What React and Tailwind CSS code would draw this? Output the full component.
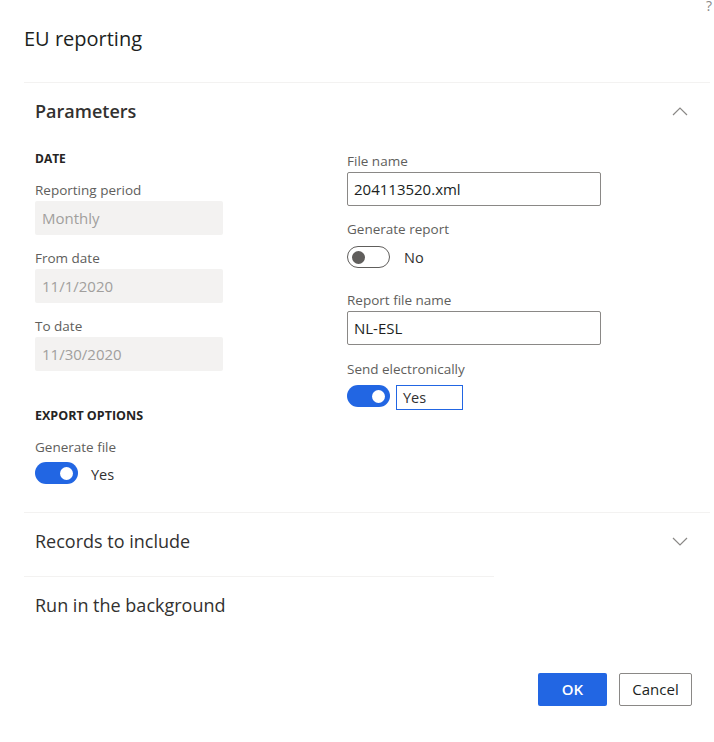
import React from "react";

const font = { fontFamily: '"Open Sans", "Noto Sans", Arial, sans-serif' };

function Chevron({ up }) {
  return (
    <svg width="16" height="9" viewBox="0 0 16 9" className="text-[#8a8886]">
      <path
        d={up ? "M1 8 L8 1 L15 8" : "M1 1 L8 8 L15 1"}
        fill="none"
        stroke="currentColor"
        strokeWidth="1.2"
      />
    </svg>
  );
}

function Toggle({ on }) {
  if (on) {
    return (
      <div className="w-[43px] h-[22px] rounded-full bg-[#2266e3] flex items-center justify-end pr-[5px] shrink-0">
        <div className="w-[13px] h-[13px] rounded-full bg-white" />
      </div>
    );
  }
  return (
    <div className="w-[43px] h-[22px] rounded-full border border-[#605e5c] flex items-center pl-[4px] shrink-0">
      <div className="w-[13px] h-[13px] rounded-full bg-[#605e5c]" />
    </div>
  );
}

function Label({ children, className = "" }) {
  return (
    <div className={`text-[13.5px] leading-[20px] text-[#605e5c] ${className}`}>
      {children}
    </div>
  );
}

function DisabledInput({ value, className = "" }) {
  return (
    <div
      className={`w-[188px] h-[34px] bg-[#f3f2f1] rounded-[2px] flex items-center px-[7px] text-[15px] text-[#a19f9d] ${className}`}
    >
      {value}
    </div>
  );
}

function TextInput({ value, className = "" }) {
  return (
    <div
      className={`w-[254px] h-[34px] border border-[#8a8886] rounded-[2px] flex items-center px-[6px] text-[15px] text-[#201f1e] ${className}`}
    >
      {value}
    </div>
  );
}

export default function App() {
  return (
    <div className="relative w-[714px] h-[742px] bg-white text-[#323130] overflow-hidden" style={font}>
      <div className="absolute top-[-5px] right-[2px] text-[14px] text-[#8a8886]">?</div>

      <div className="pt-[25px] pl-[24px]">
        <h1 className="text-[20px] leading-[28px] font-medium text-[#201f1e]">EU reporting</h1>
      </div>

      <div className="ml-[24px] mr-[4px] mt-[29px] border-t border-[#f3f2f1]">
        {/* Parameters */}
        <div className="flex items-center justify-between h-[56px] pl-[11px] pr-[22px]">
          <div className="text-[18px] leading-[26px] font-semibold text-[#323130]">Parameters</div>
          <Chevron up />
        </div>

        <div className="flex pl-[11px] pt-[11px] pb-[28px]">
          {/* left column */}
          <div className="w-[312px]">
            <div className="text-[12px] leading-[18px] font-bold text-[#252423]">DATE</div>
            <Label className="mt-[12px]">Reporting period</Label>
            <DisabledInput value="Monthly" className="mt-[1px]" />
            <Label className="mt-[13px]">From date</Label>
            <DisabledInput value="11/1/2020" className="mt-[1px]" />
            <Label className="mt-[13px]">To date</Label>
            <DisabledInput value="11/30/2020" className="mt-[1px]" />
            <div className="mt-[36px] text-[12.5px] leading-[18px] font-bold text-[#252423]">EXPORT OPTIONS</div>
            <Label className="mt-[12px]">Generate file</Label>
            <div className="mt-[5px] flex items-center gap-[13px] h-[22px]">
              <Toggle on />
              <span className="text-[14.5px] leading-[18px] text-[#323130] pt-[3px]">Yes</span>
            </div>
          </div>

          {/* right column */}
          <div className="pt-[1px]">
            <Label>File name</Label>
            <TextInput value="204113520.xml" className="mt-[1px]" />
            <Label className="mt-[13px]">Generate report</Label>
            <div className="mt-[7px] flex items-center gap-[14px] h-[22px]">
              <Toggle />
              <span className="text-[14.5px] leading-[18px] text-[#323130] pt-[2px]">No</span>
            </div>
            <Label className="mt-[22px]">Report file name</Label>
            <TextInput value="NL-ESL" className="mt-[1px]" />
            <Label className="mt-[14px]">Send electronically</Label>
            <div className="mt-[6px] flex items-start gap-[6px]">
              <Toggle on />
              <div className="w-[67px] h-[25px] border border-[#2266e3] flex items-center px-[6px] text-[14.5px] text-[#323130]">
                Yes
              </div>
            </div>
          </div>
        </div>
      </div>

      {/* Records to include */}
      <div className="ml-[24px] mr-[4px] border-t border-[#f3f2f1]">
        <div className="flex items-center justify-between pl-[11px] pr-[22px] pt-[15px] pb-[22px]">
          <div className="text-[18px] leading-[26px] text-[#323130]">Records to include</div>
          <Chevron />
        </div>
      </div>

      {/* Run in the background */}
      <div className="ml-[24px] w-[470px] border-t border-[#f3f2f1]">
        <div className="pl-[11px] pt-[15px]">
          <div className="text-[18px] leading-[26px] text-[#323130]">Run in the background</div>
        </div>
      </div>

      <div className="flex justify-end gap-[12px] pr-[22px] mt-[55px]">
        <button className="w-[69px] h-[33px] bg-[#2266e3] rounded-[2px] text-white text-[15px] font-semibold">
          OK
        </button>
        <button className="w-[73px] h-[33px] border border-[#8a8886] rounded-[2px] bg-white text-[#201f1e] text-[15px]">
          Cancel
        </button>
      </div>
    </div>
  );
}
